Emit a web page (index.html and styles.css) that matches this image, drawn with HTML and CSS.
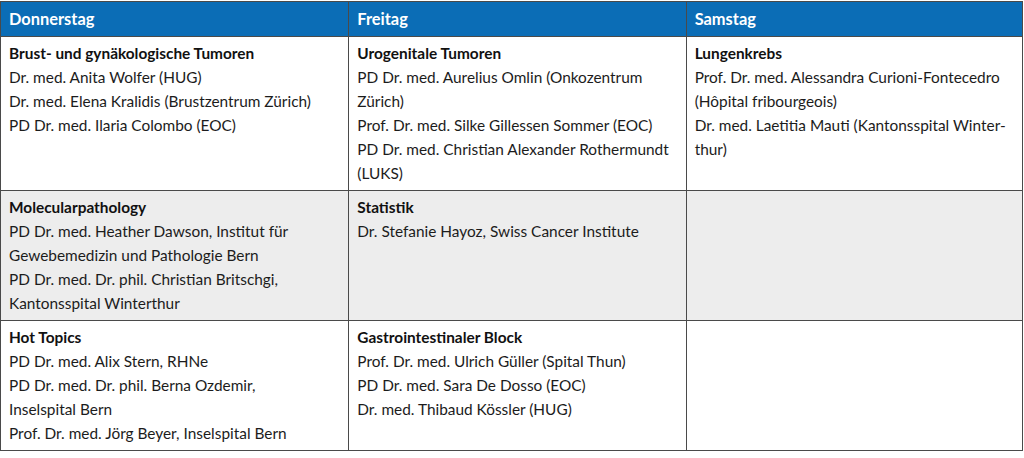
FILE: index.html
```html
<!DOCTYPE html>
<html lang="de">
<head>
<meta charset="utf-8">
<title>Programm</title>
<link rel="stylesheet" href="styles.css">
</head>
<body>
<table class="program">
  <colgroup>
    <col class="c1"><col class="c2"><col class="c3">
  </colgroup>
  <thead>
    <tr>
      <th>Donnerstag</th>
      <th>Freitag</th>
      <th>Samstag</th>
    </tr>
  </thead>
  <tbody>
    <tr>
      <td><strong>Brust- und gynäkologische Tumoren</strong><br>Dr. med. Anita Wolfer (HUG)<br>Dr. med. Elena Kralidis (Brustzentrum Zürich)<br>PD Dr. med. Ilaria Colombo (EOC)</td>
      <td><strong>Urogenitale Tumoren</strong><br>PD Dr. med. Aurelius Omlin (Onkozentrum Zürich)<br>Prof. Dr. med. Silke Gillessen Sommer (EOC)<br>PD Dr. med. Christian Alexander Rothermundt (LUKS)</td>
      <td><strong>Lungenkrebs</strong><br>Prof. Dr. med. Alessandra Curioni-Fontecedro (Hôpital fribourgeois)<br>Dr. med. Laetitia Mauti (Kantonsspital Winter-thur)</td>
    </tr>
    <tr class="alt">
      <td><strong>Molecularpathology</strong><br>PD Dr. med. Heather Dawson, Institut für Gewebemedizin und Pathologie Bern<br>PD Dr. med. Dr. phil. Christian Britschgi, Kantonsspital Winterthur</td>
      <td><strong>Statistik</strong><br>Dr. Stefanie Hayoz, Swiss Cancer Institute</td>
      <td></td>
    </tr>
    <tr>
      <td><strong>Hot Topics</strong><br>PD Dr. med. Alix Stern, RHNe<br>PD Dr. med. Dr. phil. Berna Ozdemir, Inselspital Bern<br>Prof. Dr. med. Jörg Beyer, Inselspital Bern</td>
      <td><strong>Gastrointestinaler Block</strong><br>Prof. Dr. med. Ulrich Güller (Spital Thun)<br>PD Dr. med. Sara De Dosso (EOC)<br>Dr. med. Thibaud Kössler (HUG)</td>
      <td></td>
    </tr>
  </tbody>
</table>
</body>
</html>
```

FILE: styles.css
```css
html, body {
  margin: 0;
  padding: 0;
  background: #ffffff;
}

body {
  font-family: Lato, "Liberation Sans", sans-serif;
  font-size: 15.4px;
  line-height: 24px;
  color: #1c1c1c;
}

.program {
  width: 1023px;
  margin-top: 1px;
  border-collapse: collapse;
  border: 1px solid #4a4a4a;
  table-layout: fixed;
}

.c1 { width: 348px; }
.c2 { width: 337px; }
.c3 { width: 336px; }

.program th {
  background: #0b6db6;
  color: #ffffff;
  font-weight: 700;
  font-size: 16.4px;
  text-align: left;
  height: 34px;
  padding: 0 8px;
  border: 1px solid #4a4a4a;
  border-top: none;
}

.program td {
  vertical-align: top;
  padding: 4px 8px 5px 8px;
  border: 1px solid #4a4a4a;
}

.program td:first-child {
  padding-right: 28px;
}

.program td:last-child {
  padding-right: 10px;
}

.program strong {
  font-weight: 700;
  color: #111111;
}

.program tr.alt td {
  background: #ededed;
}
```
